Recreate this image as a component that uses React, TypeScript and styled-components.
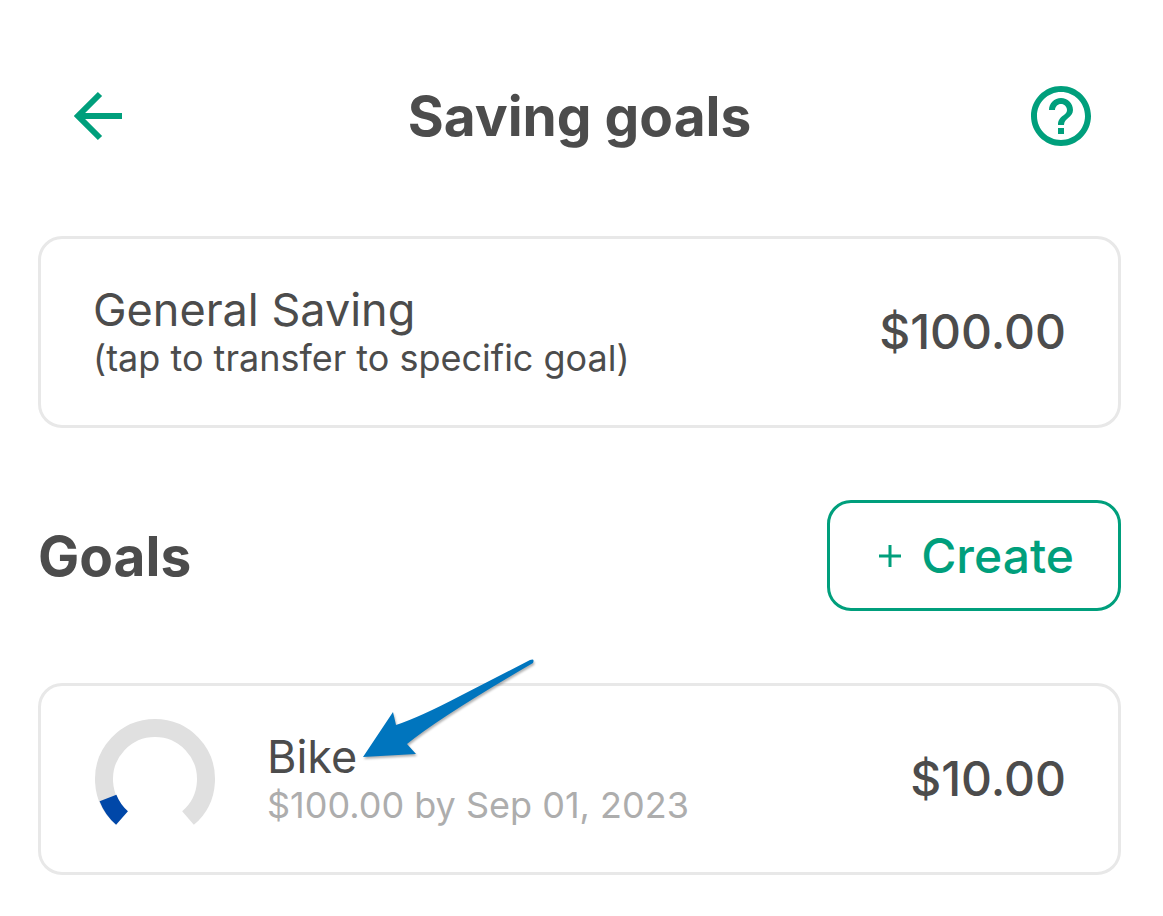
import React from "react";
import styled, { createGlobalStyle } from "styled-components";

const green = "#009f7c";
const ink = "#4c4c4c";

const GlobalStyle = createGlobalStyle`
  * { box-sizing: border-box; }
  body { margin: 0; background: #fff; color: ${ink}; font-family: Inter, "Liberation Sans", sans-serif; }
  h1, h2, p { margin: 0; }
  button { font: inherit; color: inherit; background: none; border: 0; padding: 0; cursor: pointer; }
  svg { display: block; }
`;

const Page = styled.main`
  padding: 80px 42px 40px 38px;
`;

const Header = styled.header`
  display: flex;
  align-items: center;
  justify-content: space-between;
  height: 72px;
  padding: 0 30px;
`;

const IconButton = styled.button`
  display: grid;
  place-items: center;
  width: 60px;
  height: 60px;
  color: ${green};
`;

const Title = styled.h1`
  font-size: 55px;
  line-height: 72px;
  font-weight: 700;
`;

const Card = styled.button`
  display: flex;
  align-items: center;
  width: 100%;
  min-height: 192px;
  padding: 0 52px;
  border: 3px solid #e8e8e8;
  border-radius: 24px;
  text-align: left;
`;

const General = styled(Card)`
  margin-top: 84px;
`;

const Details = styled.span`
  display: flex;
  flex: 1;
  flex-direction: column;
`;

const Name = styled.span`
  font-size: 45px;
  line-height: 52px;
`;

const Note = styled.span<{ $muted?: boolean }>`
  font-size: 36px;
  line-height: 44px;
  color: ${(p) => (p.$muted ? "#adadad" : ink)};
`;

const Amount = styled.span`
  font-size: 48px;
  line-height: 56px;
  font-weight: 500;
`;

const SectionHead = styled.div`
  display: flex;
  align-items: center;
  justify-content: space-between;
  margin: 72px 0;
`;

const SectionTitle = styled.h2`
  font-size: 55px;
  line-height: 72px;
  font-weight: 700;
`;

const CreateButton = styled.button`
  display: flex;
  align-items: center;
  gap: 20px;
  height: 111px;
  padding: 0 44px 0 49px;
  border: 3px solid ${green};
  border-radius: 24px;
  color: ${green};
  font-size: 48px;
  font-weight: 500;
`;

const Gauge = styled.svg`
  margin-right: 50px;
`;

const GoalItem = styled.div`
  position: relative;
`;

const Pointer = styled.svg`
  position: absolute;
  left: 312px;
  top: -33px;
  pointer-events: none;
  filter: drop-shadow(1px 2px 1px rgba(0, 0, 0, 0.3));
`;

export default function App() {
  return (
    <>
      <GlobalStyle />
      <Page>
        <Header>
          <IconButton aria-label="Back">
            <svg width="60" height="60" viewBox="0 0 60 60" fill="none" stroke="currentColor" strokeWidth="6">
              <path d="M54 30H11M32 8 10 30l22 22" />
            </svg>
          </IconButton>
          <Title>Saving goals</Title>
          <IconButton aria-label="Help">
            <svg width="60" height="60" viewBox="2 2 20 20" fill="currentColor">
              <path d="M11 18h2v-2h-2v2zm1-16C6.48 2 2 6.48 2 12s4.48 10 10 10 10-4.48 10-10S17.52 2 12 2zm0 18c-4.41 0-8-3.59-8-8s3.59-8 8-8 8 3.59 8 8-3.59 8-8 8zm0-14c-2.21 0-4 1.79-4 4h2c0-1.1.9-2 2-2s2 .9 2 2c0 2-3 1.75-3 5h2c0-2.25 3-2.5 3-5 0-2.21-1.79-4-4-4z" />
            </svg>
          </IconButton>
        </Header>
        <General>
          <Details>
            <Name>General Saving</Name>
            <Note>(tap to transfer to specific goal)</Note>
          </Details>
          <Amount>$100.00</Amount>
        </General>
        <SectionHead>
          <SectionTitle>Goals</SectionTitle>
          <CreateButton>
            <svg width="22" height="22" viewBox="0 0 22 22" stroke="currentColor" strokeWidth="3" aria-hidden="true">
              <path d="M11 0v22M0 11h22" />
            </svg>
            Create
          </CreateButton>
        </SectionHead>
        <GoalItem>
          <Card>
            <Gauge width="124" height="120" viewBox="-2 0 124 120" fill="none" strokeWidth="18" aria-hidden="true">
              <path stroke="#e0e0e0" d="M27 99A51 51 0 1 1 93 99" />
              <path stroke="#0047a8" d="M27 99A51 51 0 0 1 13 79" />
            </Gauge>
            <Details>
              <Name>Bike</Name>
              <Note $muted>$100.00 by Sep 01, 2023</Note>
            </Details>
            <Amount>$10.00</Amount>
          </Card>
          <Pointer width="190" height="120" viewBox="350 650 190 120" aria-hidden="true">
            <path fill="#0075be" d="M363 757 393 712 396 725Q420 717 460 696L530 660Q535 658 533 663Q440 717 407 744L416 754Z" />
          </Pointer>
        </GoalItem>
      </Page>
    </>
  );
}
